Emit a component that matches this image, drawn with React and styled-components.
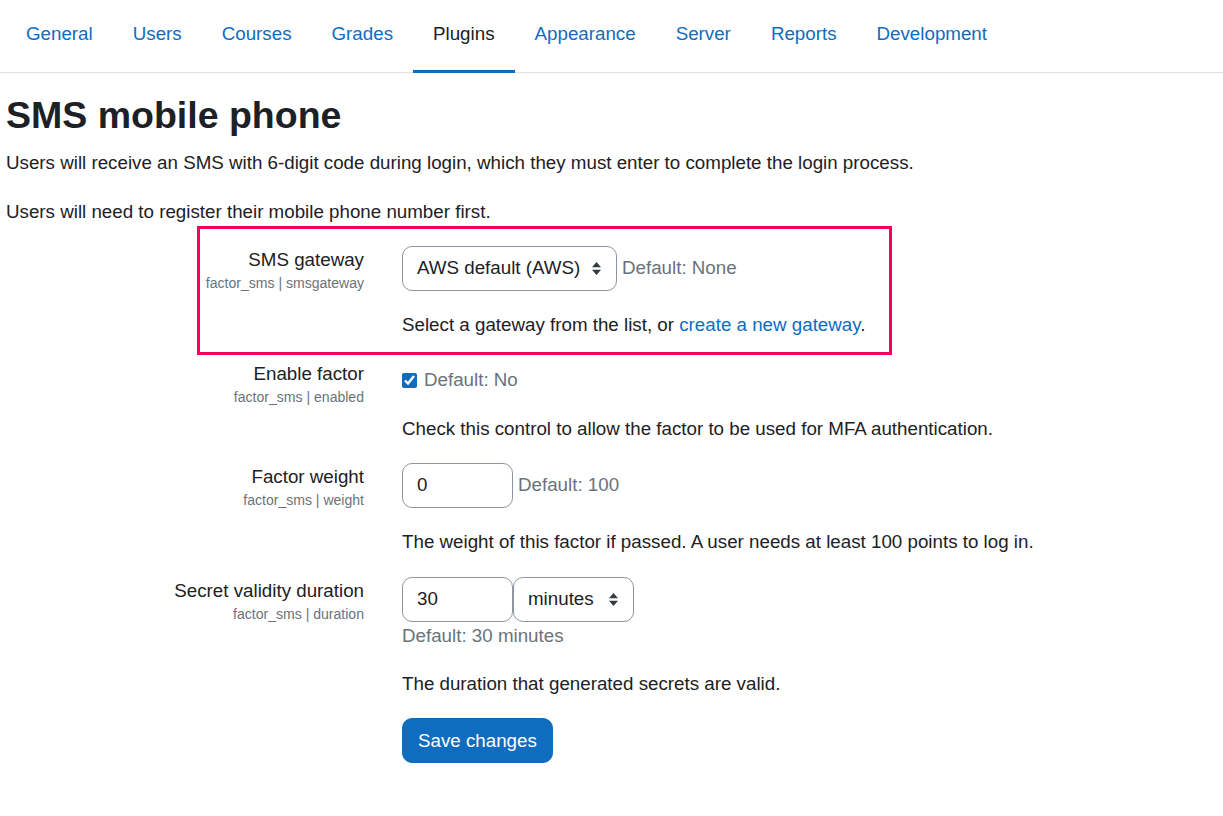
import React from "react";
import styled, { createGlobalStyle } from "styled-components";

const GlobalStyle = createGlobalStyle`
  body {
    margin: 0;
    background: #fff;
    color: #1d2125;
    font-family: "Liberation Sans", Arial, sans-serif;
    font-size: 18.75px;
    line-height: 1.5;
  }
`;

const Nav = styled.nav`
  display: flex;
  height: 72px;
  padding-left: 6px;
  border-bottom: 1px solid #dee2e6;
`;

const NavLink = styled.a`
  display: flex;
  align-items: center;
  box-sizing: border-box;
  height: 73px;
  padding: 0 20px 1px;
  border-bottom: 3px solid ${(p) => (p.$active ? "#0f6cbf" : "transparent")};
  color: ${(p) => (p.$active ? "#1d2125" : "#0f6cbf")};
  text-decoration: none;
  white-space: nowrap;
`;

const Main = styled.main`
  padding: 20px 6px 40px;
`;

const Title = styled.h2`
  margin: 0 0 10.5px;
  font-size: 37.5px;
  line-height: 45px;
  font-weight: 700;
`;

const Intro = styled.p`
  margin: 0;

  & + & {
    margin-top: 21.7px;
  }
`;

const Form = styled.form`
  display: flex;
  flex-direction: column;
  gap: 20.25px;
  margin-top: 19.5px;
`;

const Row = styled.div`
  position: relative;
  display: grid;
  grid-template-columns: 358px 1fr;
  column-gap: 38px;

  ${(p) =>
    p.$highlight &&
    `
    &::before {
      content: "";
      position: absolute;
      left: 191px;
      top: -20px;
      width: 695px;
      height: 129px;
      box-sizing: border-box;
      border: 3px solid #f5005f;
      pointer-events: none;
    }
  `}
`;

const LabelCol = styled.div`
  text-align: right;
`;

const Label = styled.label`
  display: block;
  line-height: 28px;
`;

const ShortName = styled.div`
  margin-top: 1.5px;
  font-size: 14.06px;
  line-height: 17px;
  color: #6a737b;
`;

const Controls = styled.div`
  display: flex;
  flex-wrap: wrap;
  align-items: center;
  padding-top: ${(p) => p.$pad || 0}px;
`;

const Select = styled.div`
  display: flex;
  align-items: center;
  justify-content: space-between;
  box-sizing: border-box;
  width: ${(p) => p.$width}px;
  height: 45px;
  padding: 0 15px 0 14px;
  border: 1px solid #8f959e;
  border-radius: 10px;
  background: #fff;
  color: #1d2125;
  white-space: nowrap;
`;

const Input = styled.input`
  box-sizing: border-box;
  width: 111px;
  height: 45px;
  padding: 0 14px;
  border: 1px solid #8f959e;
  border-radius: 10px;
  font: inherit;
  color: #1d2125;
  background: #fff;
  outline: none;
`;

const Checkbox = styled.input`
  width: 15px;
  height: 15px;
  margin: 0 7px 0 0;
  accent-color: #0f6cbf;
`;

const DefaultInfo = styled.div`
  margin-left: ${(p) => p.$gap ?? 5}px;
  flex-basis: ${(p) => (p.$block ? "100%" : "auto")};
  color: #6a737b;
  line-height: 28px;
`;

const Description = styled.div`
  margin-top: 20.5px;
  line-height: 28px;
`;

const Link = styled.a`
  color: #0f6cbf;
  text-decoration: none;
`;

const Button = styled.button`
  box-sizing: border-box;
  padding: 7.5px 15px;
  border: 1px solid #0f6cbf;
  border-radius: 10px;
  background: #0f6cbf;
  color: #fff;
  font: inherit;
  line-height: 28px;
  cursor: pointer;
`;

const Arrows = () => (
  <svg width="9" height="13" viewBox="0 0 4 5" preserveAspectRatio="none">
    <path fill="#343a40" d="M2 0L0 2h4zm0 5L0 3h4z" />
  </svg>
);

const tabs = [
  "General",
  "Users",
  "Courses",
  "Grades",
  "Plugins",
  "Appearance",
  "Server",
  "Reports",
  "Development",
];

const Setting = ({ label, name, children, description, highlight }) => (
  <Row $highlight={highlight}>
    <LabelCol>
      <Label>{label}</Label>
      <ShortName>{name}</ShortName>
    </LabelCol>
    <div>
      {children}
      <Description>{description}</Description>
    </div>
  </Row>
);

export default function App() {
  return (
    <>
      <GlobalStyle />
      <Nav>
        {tabs.map((t) => (
          <NavLink key={t} href="#" $active={t === "Plugins"}>
            {t}
          </NavLink>
        ))}
      </Nav>
      <Main>
        <Title>SMS mobile phone</Title>
        <Intro>
          Users will receive an SMS with 6-digit code during login, which they
          must enter to complete the login process.
        </Intro>
        <Intro>Users will need to register their mobile phone number first.</Intro>

        <Form onSubmit={(e) => e.preventDefault()}>
          <Setting
            highlight
            label="SMS gateway"
            name="factor_sms | smsgateway"
            description={
              <>
                Select a gateway from the list, or{" "}
                <Link href="#">create a new gateway</Link>.
              </>
            }
          >
            <Controls>
              <Select $width={215}>
                AWS default (AWS)
                <Arrows />
              </Select>
              <DefaultInfo>Default: None</DefaultInfo>
            </Controls>
          </Setting>

          <Setting
            label="Enable factor"
            name="factor_sms | enabled"
            description="Check this control to allow the factor to be used for MFA authentication."
          >
            <Controls $pad={6.5}>
              <Checkbox type="checkbox" defaultChecked />
              <DefaultInfo $gap={0}>Default: No</DefaultInfo>
            </Controls>
          </Setting>

          <Setting
            label="Factor weight"
            name="factor_sms | weight"
            description="The weight of this factor if passed. A user needs at least 100 points to log in."
          >
            <Controls>
              <Input defaultValue="0" />
              <DefaultInfo>Default: 100</DefaultInfo>
            </Controls>
          </Setting>

          <Setting
            label="Secret validity duration"
            name="factor_sms | duration"
            description="The duration that generated secrets are valid."
          >
            <Controls>
              <Input defaultValue="30" />
              <Select $width={121}>
                minutes
                <Arrows />
              </Select>
              <DefaultInfo $block $gap={0}>
                Default: 30 minutes
              </DefaultInfo>
            </Controls>
          </Setting>

          <Row>
            <div />
            <div>
              <Button type="submit">Save changes</Button>
            </div>
          </Row>
        </Form>
      </Main>
    </>
  );
}
